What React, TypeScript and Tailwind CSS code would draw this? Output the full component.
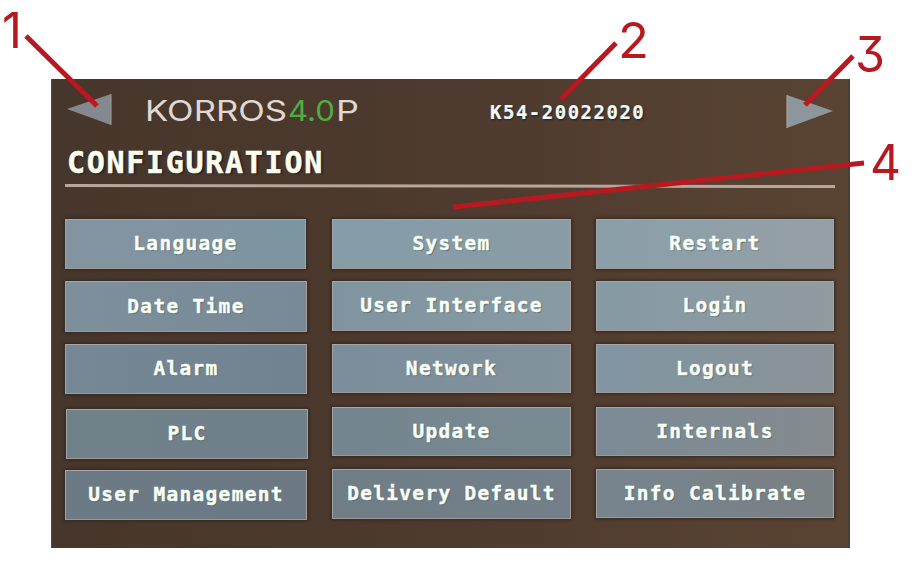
type Item = { label: string; box: string; tone: string };

const columns: { className: string; items: Item[] }[] = [
  {
    className: "ml-[14px] w-[243px]",
    items: [
      { label: "Language", box: "h-[50px] w-[241px]", tone: "from-[#8493a0] to-[#7c95a0]" },
      { label: "Date Time", box: "mt-[12px] h-[51px] w-[242px]", tone: "from-[#7c8f9b] to-[#788a97]" },
      { label: "Alarm", box: "mt-[12px] h-[50px] w-[242px]", tone: "from-[#768896] to-[#718390]" },
      { label: "PLC", box: "ml-px mt-[15px] h-[50px] w-[242px]", tone: "from-[#6f8189] to-[#6f808b]" },
      { label: "User Management", box: "mt-[11px] h-[50px] w-[242px]", tone: "from-[#6b7b86] to-[#6c7985]" },
    ],
  },
  {
    className: "ml-[24px] w-[239px]",
    items: [
      { label: "System", box: "h-[50px]", tone: "from-[#859ca6] to-[#8a9da6]" },
      { label: "User Interface", box: "mt-[12px] h-[50px]", tone: "from-[#8094a0] to-[#889ba3]" },
      { label: "Network", box: "mt-[13px] h-[49px]", tone: "from-[#7b8d9a] to-[#82939d]" },
      { label: "Update", box: "mt-[14px] h-[49px]", tone: "from-[#75858f] to-[#788a92]" },
      { label: "Delivery Default", box: "mt-[13px] h-[50px]", tone: "from-[#6f7d87] to-[#738089]" },
    ],
  },
  {
    className: "ml-[25px] w-[238px]",
    items: [
      { label: "Restart", box: "h-[50px]", tone: "from-[#8a9fa9] to-[#969fa5]" },
      { label: "Login", box: "mt-[12px] h-[50px]", tone: "from-[#859aa4] to-[#919ba0]" },
      { label: "Logout", box: "mt-[13px] h-[49px]", tone: "from-[#8096a2] to-[#8b9297]" },
      { label: "Internals", box: "mt-[14px] h-[49px]", tone: "from-[#7b8b96] to-[#858a8e]" },
      { label: "Info Calibrate", box: "mt-[13px] h-[49px]", tone: "from-[#77848e] to-[#7a8084]" },
    ],
  },
];

function MenuButton({ item }: { item: Item }) {
  return (
    <button
      className={`flex items-center justify-center border border-t-[#a4a4a9] border-l-[#a2a2a7] border-r-[#ad9f99] border-b-[#a09894] bg-linear-to-r whitespace-pre text-[19.5px] leading-none font-bold tracking-[1.3px] text-[#f7fff6] shadow-[0_0_3px_1px_#302820] [-webkit-text-stroke:0.4px_#f7fff6] [text-shadow:1px_1px_1px_#596771] ${item.box} ${item.tone}`}
    >
      {item.label}
    </button>
  );
}

function Brand() {
  return (
    <svg className="ml-[33px] mt-[15px] h-[34px] w-[216px]" viewBox="0 0 216 34" fontFamily="Inter, sans-serif" fontSize="28" fontWeight="400">
      <text x="0" y="27" textLength="142" lengthAdjust="spacingAndGlyphs" fill="#ded9d6">KORROS</text>
      <text x="143" y="27" textLength="47" lengthAdjust="spacingAndGlyphs" fill="#4eae3f">4.0</text>
      <text x="191" y="27" textLength="23" lengthAdjust="spacingAndGlyphs" fill="#ded9d6">P</text>
    </svg>
  );
}

function Callouts() {
  return (
    <svg className="pointer-events-none absolute inset-0 h-[584px] w-[921px]" viewBox="0 0 921 584">
      <g stroke="#b71920" strokeWidth="5">
        <path d="M26 36 97 106M616 43 561 99M853 56 805 105M864 163 453 207" />
      </g>
      <g fill="#b71920" fontFamily="Inter, sans-serif" fontSize="49.5" style={{ fontFeatureSettings: '"cv09"' }}>
        <text x="2" y="48" textLength="20" lengthAdjust="spacingAndGlyphs">1</text>
        <text x="618" y="58" textLength="31" lengthAdjust="spacingAndGlyphs">2</text>
        <text x="855" y="72" textLength="30" lengthAdjust="spacingAndGlyphs">3</text>
        <text x="870" y="180" textLength="31" lengthAdjust="spacingAndGlyphs">4</text>
      </g>
    </svg>
  );
}

export default function App() {
  return (
    <div className="relative h-[584px] w-[921px] overflow-hidden bg-white pt-[79px] pl-[51px]">
      <main className="flex h-[469px] w-[799px] flex-col border-l border-r-2 border-l-[#594b3c] border-r-[#443f38] bg-linear-to-r from-[#47362b] via-[#4e3a2e] to-[#594433] font-['DejaVu_Sans_Mono',monospace]">
        <header className="flex h-[66px] items-start">
          <svg className="ml-[14px] mt-[14px] h-[34px] w-[46px]" viewBox="0 0 46 34">
            <path d="M1 16 45 1V32Z" fill="#85898f" />
            <path d="M45 1V32" stroke="#a49b8c" strokeWidth="1" />
          </svg>
          <Brand />
          <span className="ml-[129px] mt-[23px] w-[160px] whitespace-nowrap text-[19px] leading-[20px] font-bold tracking-[1.5px] text-[#f4faf8] [-webkit-text-stroke:0.2px_#f4faf8] [text-shadow:1px_1px_2px_#17202b]">
            K54-20022020
          </span>
          <svg className="ml-[136px] mt-[16px] h-[34px] w-[48px]" viewBox="0 0 48 34">
            <path d="M1 0V33L47 16Z" fill="#8e969d" />
            <path d="M1 0V33" stroke="#b0aaa5" strokeWidth="1" />
          </svg>
        </header>
        <h1 className="ml-[15px] h-[39px] whitespace-nowrap text-[30px] leading-[36px] font-bold tracking-[1.7px] text-[#fcfeea] [-webkit-text-stroke:0.5px_#fcfeea] [text-shadow:2px_1px_2px_#172033]">
          CONFIGURATION
        </h1>
        <svg className="ml-[13px] h-[5px] w-[770px] shrink-0" viewBox="0 0 770 5">
          <path d="M0 0 770 1V4L0 3Z" fill="#b6a69b" />
        </svg>
        <nav className="mt-[30px] flex">
          {columns.map((column) => (
            <div key={column.items[0].label} className={`-translate-x-px flex shrink-0 flex-col ${column.className}`}>
              {column.items.map((item) => (
                <MenuButton key={item.label} item={item} />
              ))}
            </div>
          ))}
        </nav>
      </main>
      <Callouts />
    </div>
  );
}
